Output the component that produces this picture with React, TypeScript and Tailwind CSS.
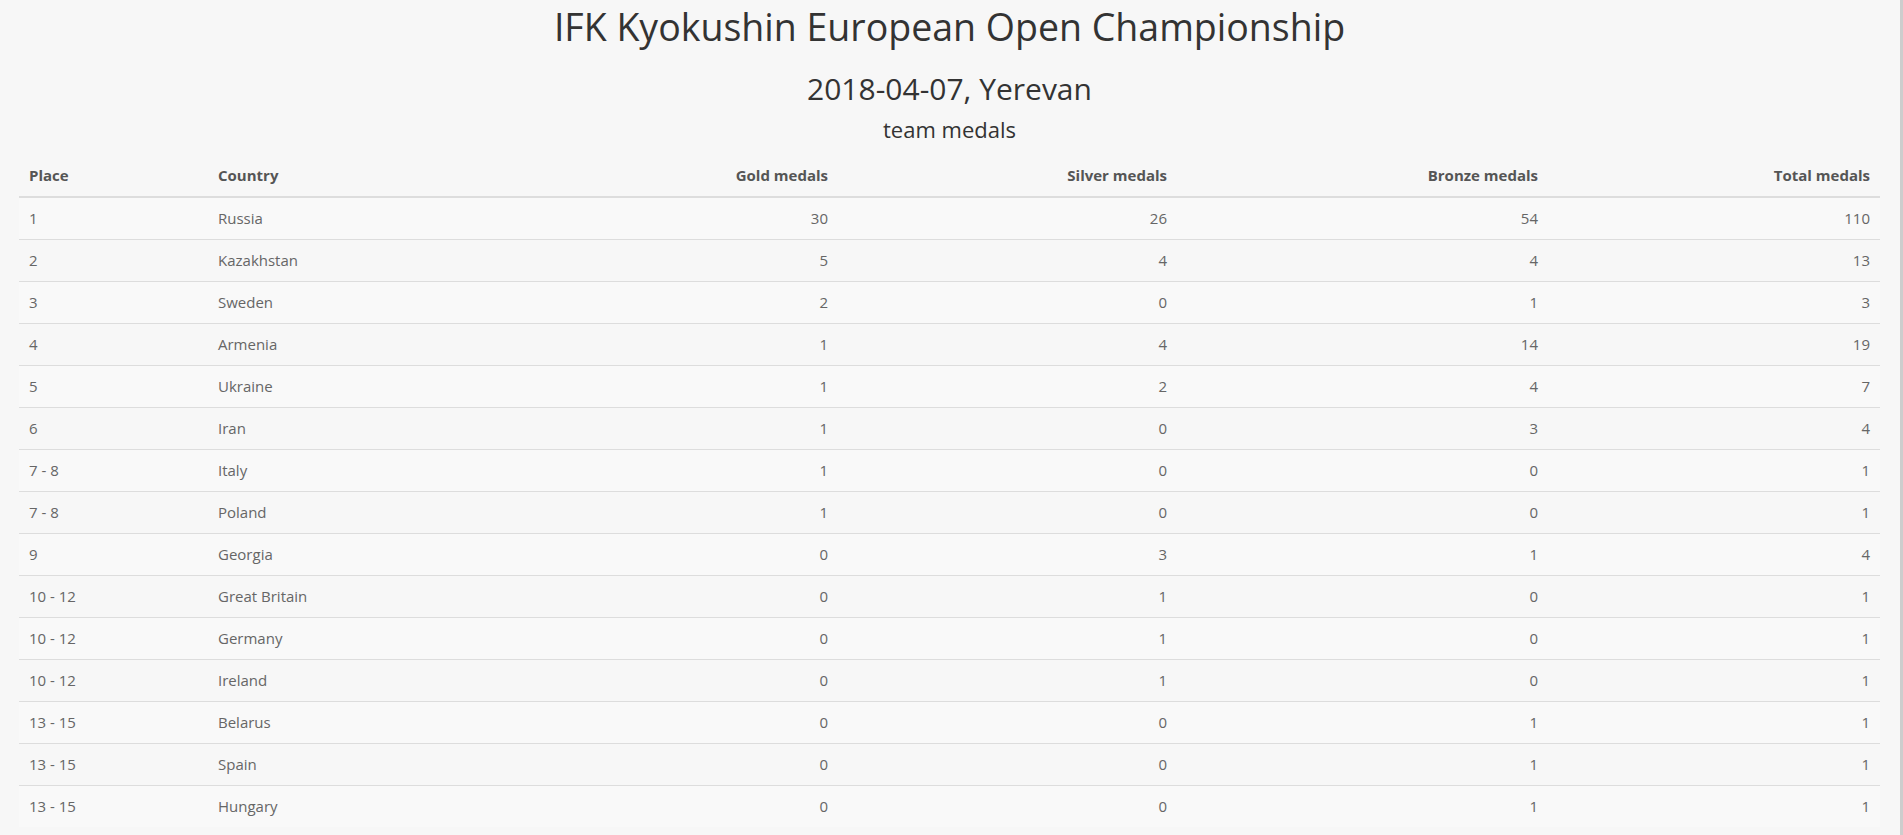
const rows: [string, string, number, number, number, number][] = [
  ['1', 'Russia', 30, 26, 54, 110],
  ['2', 'Kazakhstan', 5, 4, 4, 13],
  ['3', 'Sweden', 2, 0, 1, 3],
  ['4', 'Armenia', 1, 4, 14, 19],
  ['5', 'Ukraine', 1, 2, 4, 7],
  ['6', 'Iran', 1, 0, 3, 4],
  ['7 - 8', 'Italy', 1, 0, 0, 1],
  ['7 - 8', 'Poland', 1, 0, 0, 1],
  ['9', 'Georgia', 0, 3, 1, 4],
  ['10 - 12', 'Great Britain', 0, 1, 0, 1],
  ['10 - 12', 'Germany', 0, 1, 0, 1],
  ['10 - 12', 'Ireland', 0, 1, 0, 1],
  ['13 - 15', 'Belarus', 0, 0, 1, 1],
  ['13 - 15', 'Spain', 0, 0, 1, 1],
  ['13 - 15', 'Hungary', 0, 0, 1, 1],
];

const App = () => {
  return (
    <div className="flex h-[835px] overflow-hidden bg-[#f7f7f7] font-['Open_Sans',sans-serif]">
      <div className="flex-1 pl-[19px] pr-[20px]">
        <h1 className="mt-[4px] text-center text-[37.5px] leading-[46px] font-normal text-[#333]">
          IFK Kyokushin European Open Championship
        </h1>
        <h2 className="mt-[21px] text-center text-[30px] leading-[36px] font-normal text-[#333]">
          2018-04-07, Yerevan
        </h2>
        <h4 className="mt-[9px] text-center text-[22px] leading-[26px] font-normal text-[#333]">
          team medals
        </h4>

        <table className="mt-[10px] w-full table-fixed border-collapse text-[15px] text-[#666]">
          <colgroup>
            <col className="w-[189px]" />
            <col className="w-[315px]" />
            <col className="w-[315px]" />
            <col className="w-[339px]" />
            <col className="w-[371px]" />
            <col className="w-[332px]" />
          </colgroup>
          <thead>
            <tr className="border-b-2 border-[#ddd] font-bold text-[#555]">
              <th className="px-[10px] pt-[11px] pb-[9px] text-left leading-6">Place</th>
              <th className="px-[10px] pt-[11px] pb-[9px] text-left leading-6">Country</th>
              <th className="px-[10px] pt-[11px] pb-[9px] text-right leading-6">Gold medals</th>
              <th className="px-[10px] pt-[11px] pb-[9px] text-right leading-6">Silver medals</th>
              <th className="px-[10px] pt-[11px] pb-[9px] text-right leading-6">Bronze medals</th>
              <th className="px-[10px] pt-[11px] pb-[9px] text-right leading-6">Total medals</th>
            </tr>
          </thead>
          <tbody>
            {rows.map(([place, country, gold, silver, bronze, total], i) => (
              <tr
                key={country}
                className={`${i > 0 ? 'border-t border-[#ddd]' : ''} ${i % 2 === 0 ? 'bg-[#f9f9f9]' : ''}`}
              >
                <td className="px-[10px] py-2 leading-[25px]">{place}</td>
                <td className="px-[10px] py-2 leading-[25px]">{country}</td>
                <td className="px-[10px] py-2 text-right leading-[25px]">{gold}</td>
                <td className="px-[10px] py-2 text-right leading-[25px]">{silver}</td>
                <td className="px-[10px] py-2 text-right leading-[25px]">{bronze}</td>
                <td className="px-[10px] py-2 text-right leading-[25px]">{total}</td>
              </tr>
            ))}
          </tbody>
        </table>
      </div>
      <div className="w-[3px] bg-[#cdcdcd]" />
    </div>
  );
};

export default App;
